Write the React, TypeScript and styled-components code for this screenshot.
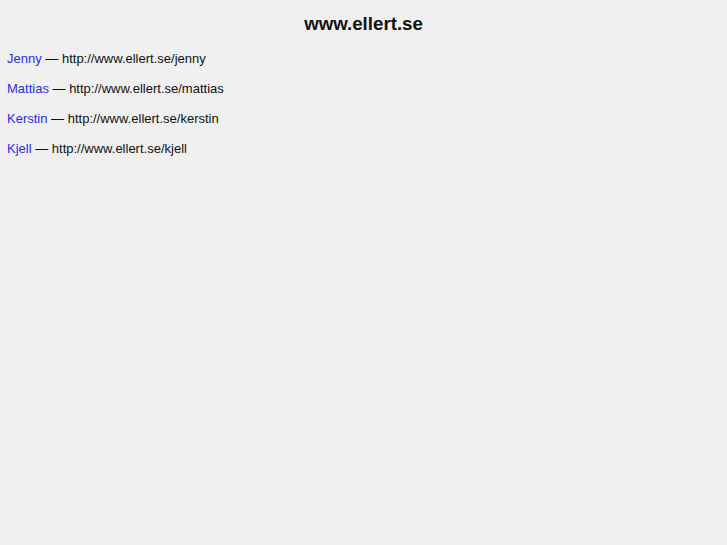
import React from 'react';
import styled, { createGlobalStyle } from 'styled-components';

const GlobalStyle = createGlobalStyle`
  html, body {
    margin: 0;
    background: #f0f0f0;
  }
  body {
    padding: 8px 7px;
    font-family: "Liberation Sans", Arial, Helvetica, sans-serif;
    color: #111;
  }
`;

const Title = styled.h1`
  margin: 4px 0 15px;
  text-align: center;
  font-size: 18.7px;
  font-weight: 700;
  line-height: 24px;
`;

const Entry = styled.p`
  margin: 0 0 14px;
  font-size: 13px;
  line-height: 16px;
`;

const Name = styled.a`
  color: #2b2bf0;
  text-decoration: none;
`;

const people = [
  { name: 'Jenny', slug: 'jenny' },
  { name: 'Mattias', slug: 'mattias' },
  { name: 'Kerstin', slug: 'kerstin' },
  { name: 'Kjell', slug: 'kjell' },
];

export default function App() {
  return (
    <>
      <GlobalStyle />
      <Title>www.ellert.se</Title>
      {people.map((p) => (
        <Entry key={p.slug}>
          <Name href={`#${p.slug}`}>{p.name}</Name> — http://www.ellert.se/{p.slug}
        </Entry>
      ))}
    </>
  );
}
